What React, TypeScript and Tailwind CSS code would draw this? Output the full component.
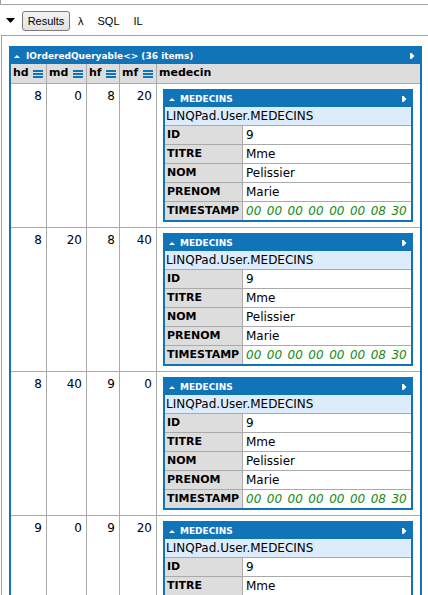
import React from 'react';

function Bars() {
  return (
    <svg width="10" height="8" viewBox="0 0 10 8" className="block">
      <rect x="0" y="0" width="10" height="2" fill="#1174b9" />
      <rect x="0" y="3" width="10" height="2" fill="#1174b9" />
      <rect x="0" y="6" width="10" height="2" fill="#1174b9" />
    </svg>
  );
}

function Up() {
  return (
    <svg width="6" height="3" viewBox="0 0 6 3" className="block">
      <polygon points="0,3 3,0 6,3" fill="#ffffff" />
    </svg>
  );
}

function Right() {
  return (
    <svg width="5" height="6" viewBox="0 0 5 6" className="block">
      <polygon points="0,0 1.5,0 4.5,3 1.5,6 0,6" fill="#ffffff" />
    </svg>
  );
}

function KV({ k, v, ts }: { k: string; v: string; ts?: boolean }) {
  return (
    <div className="h-[19px] border-t border-[#aaaaaa] flex">
      <div className="w-[78px] shrink-0 bg-[#dddddd] border-r border-[#aaaaaa] pl-[2px] flex items-center font-bold text-[11px] text-black">
        {k}
      </div>
      <div
        className={
          ts
            ? 'flex-1 pl-[3px] flex items-center text-[12px] italic text-[#138a13] [word-spacing:1.7px] whitespace-nowrap'
            : 'flex-1 pl-[3px] flex items-center text-[12px] text-black'
        }
      >
        {v}
      </div>
    </div>
  );
}

function Medecin() {
  return (
    <div className="w-[250px] border-2 border-[#1174b9] bg-white">
      <div className="h-[16px] bg-[#1174b9] flex items-center pl-[4px] pr-[4px]">
        <Up />
        <span className="ml-[5px] text-white font-bold text-[9px] leading-none">MEDECINS</span>
        <span className="ml-auto">
          <Right />
        </span>
      </div>
      <div className="h-[18px] bg-[#ddecfb] flex items-center pl-[1px] text-[12px] text-black">
        LINQPad.User.MEDECINS
      </div>
      <KV k="ID" v="9" />
      <KV k="TITRE" v="Mme" />
      <KV k="NOM" v="Pelissier" />
      <KV k="PRENOM" v="Marie" />
      <KV k="TIMESTAMP" v="00 00 00 00 00 00 08 30" ts />
    </div>
  );
}

const rows = [
  [8, 0, 8, 20],
  [8, 20, 8, 40],
  [8, 40, 9, 0],
  [9, 0, 9, 20],
];

export default function App() {
  return (
    <div className="w-[428px] h-[595px] overflow-hidden bg-white font-['DejaVu_Sans',sans-serif] text-black">
      <div className="h-[5px] border-b border-l border-[#a0a0a0]" />
      <div className="h-[30px] flex items-center font-['Liberation_Sans',Arial,sans-serif] text-[11px]">
        <svg width="9" height="5" viewBox="0 0 9 5" className="ml-[6px] block">
          <polygon points="0,0 9,0 4.5,5" fill="#000000" />
        </svg>
        <div className="ml-[7px] mt-[2px] w-[48px] h-[20px] border border-[#7a7a7a] rounded-[3px] bg-gradient-to-b from-[#f4f4f4] to-[#e2e2e2] flex items-center justify-center">
          Results
        </div>
        <span className="ml-[8px] mt-[2px]">λ</span>
        <span className="ml-[14px] mt-[2px]">SQL</span>
        <span className="ml-[14px] mt-[2px]">IL</span>
      </div>
      <div className="ml-[1px] border-t border-l border-[#a0a0a0] pl-[7px] pt-[10px] h-[600px]">
        <div className="w-[413px] border-2 border-[#1174b9]">
          <div className="h-[16px] bg-[#1174b9] flex items-center pl-[3px] pr-[5px]">
            <Up />
            <span className="ml-[6px] text-white font-bold text-[9px] leading-none">
              IOrderedQueryable&lt;&gt; (36 items)
            </span>
            <span className="ml-auto">
              <Right />
            </span>
          </div>
          <div className="h-[20px] bg-[#dddddd] border-b border-[#aaaaaa] flex font-bold text-[11px]">
            <div className="w-[36px] shrink-0 border-r border-[#aaaaaa] flex items-center justify-between pl-[2px] pr-[3px]">
              <span>hd</span>
              <Bars />
            </div>
            <div className="w-[40px] shrink-0 border-r border-[#aaaaaa] flex items-center justify-between pl-[2px] pr-[3px]">
              <span>md</span>
              <Bars />
            </div>
            <div className="w-[33px] shrink-0 border-r border-[#aaaaaa] flex items-center justify-between pl-[2px] pr-[3px]">
              <span>hf</span>
              <Bars />
            </div>
            <div className="w-[37px] shrink-0 border-r border-[#aaaaaa] flex items-center justify-between pl-[2px] pr-[3px]">
              <span>mf</span>
              <Bars />
            </div>
            <div className="flex-1 flex items-center pl-[2px]">
              <span>medecin</span>
            </div>
          </div>
          {rows.map((r, i) => (
            <div key={i} className="h-[144px] border-b border-[#aaaaaa] flex text-[12px]">
              <div className="w-[36px] shrink-0 border-r border-[#aaaaaa] text-right pr-[4px] pt-[3px]">{r[0]}</div>
              <div className="w-[40px] shrink-0 border-r border-[#aaaaaa] text-right pr-[4px] pt-[3px]">{r[1]}</div>
              <div className="w-[33px] shrink-0 border-r border-[#aaaaaa] text-right pr-[4px] pt-[3px]">{r[2]}</div>
              <div className="w-[37px] shrink-0 border-r border-[#aaaaaa] text-right pr-[4px] pt-[3px]">{r[3]}</div>
              <div className="flex-1 pl-[6px] pt-[5px]">
                <Medecin />
              </div>
            </div>
          ))}
        </div>
      </div>
    </div>
  );
}
